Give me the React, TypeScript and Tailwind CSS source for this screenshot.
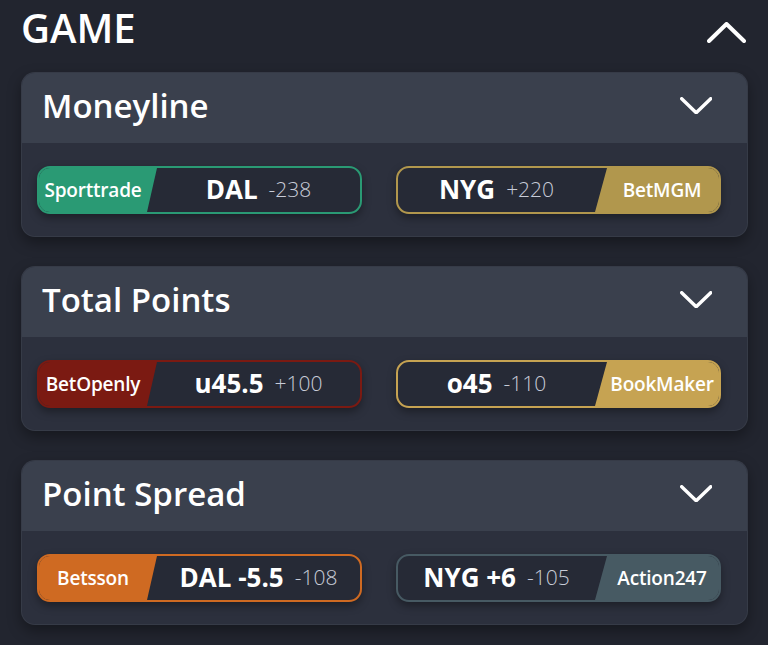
type Side = {
    book: string;
    color: string;
    border: string;
    main: string;
    odds: string;
};

const markets: { title: string; left: Side; right: Side }[] = [
    {
        title: "Moneyline",
        left: { book: "Sporttrade", color: "bg-[#2a9a74]", border: "border-[#2a9a74]", main: "DAL", odds: "-238" },
        right: { book: "BetMGM", color: "bg-[#b1974d]", border: "border-[#b1974d]", main: "NYG", odds: "+220" },
    },
    {
        title: "Total Points",
        left: { book: "BetOpenly", color: "bg-[#7b1a12]", border: "border-[#7b1a12]", main: "u45.5", odds: "+100" },
        right: { book: "BookMaker", color: "bg-[#c6a352]", border: "border-[#c6a352]", main: "o45", odds: "-110" },
    },
    {
        title: "Point Spread",
        left: { book: "Betsson", color: "bg-[#cf6a22]", border: "border-[#cf6a22]", main: "DAL -5.5", odds: "-108" },
        right: { book: "Action247", color: "bg-[#475a63]", border: "border-[#475a63]", main: "NYG +6", odds: "-105" },
    },
];

// simple chevron, drawn by hand so the stroke matches the screenshot
const Chevron = ({ up, w, h, stroke }: { up?: boolean; w: number; h: number; stroke: number }) => (
    <svg width={w + stroke} height={h + stroke} viewBox={`${-stroke / 2} ${-stroke / 2} ${w + stroke} ${h + stroke}`} fill="none">
        <polyline
            points={up ? `0,${h} ${w / 2},0 ${w},${h}` : `0,0 ${w / 2},${h} ${w},0`}
            stroke="white"
            strokeWidth={stroke}
            strokeLinecap="round"
            strokeLinejoin="round"
        />
    </svg>
);

const Pill = ({ side, flip }: { side: Side; flip?: boolean }) => {
    const book = (
        <div
            className={`${side.color} flex h-full items-center justify-center text-[19px] font-semibold tracking-[-0.2px] whitespace-nowrap text-white ${flip
                ? "w-[124px] pl-[12px] pr-[2px] [clip-path:polygon(12px_0,100%_0,100%_100%,0_100%)]"
                : "w-[118px] pr-[10px] [clip-path:polygon(0_0,100%_0,calc(100%-10px)_100%,0_100%)]"
                }`}
        >
            {side.book}
        </div>
    );
    return (
        <div
            className={`flex h-[48px] items-stretch overflow-hidden rounded-[13px] border-2 ${side.border} bg-[#262a36] shadow-[0_4px_8px_rgba(0,0,0,0.35)]`}
        >
            {!flip && book}
            <div className="flex flex-1 items-center justify-center gap-[11px] pb-[2px]">
                <span className="text-[26px] leading-none font-bold text-white">{side.main}</span>
                <span className="text-[21px] leading-none font-light text-[#c8ccd8]">{side.odds}</span>
            </div>
            {flip && book}
        </div>
    );
};

export default function App() {
    return (
        <div
            className="min-h-[645px] w-[768px] bg-[#22252f] pl-[21px] pr-[20px] pt-[4px]"
            style={{ fontFamily: "'Open Sans', Lato, sans-serif" }}
        >
            <div className="flex h-[68px] items-start justify-between">
                <h1 className="text-[40px] leading-[48px] font-semibold text-white">GAME</h1>
                <div className="mr-[2px] mt-[18px]">
                    <Chevron up w={35} h={17} stroke={4} />
                </div>
            </div>
            <div className="flex flex-col gap-[29px]">
                {markets.map((m) => (
                    <div
                        key={m.title}
                        className="overflow-hidden rounded-[14px] border border-[#40465280] bg-[#2c303d] shadow-[0_6px_14px_rgba(0,0,0,0.35)]"
                    >
                        <div className="flex h-[70px] items-center justify-between bg-[#3a404d] pb-[5px] pl-[20px] pr-[35px]">
                            <span className="text-[33px] leading-none font-semibold text-white">{m.title}</span>
                            <Chevron w={29} h={14} stroke={3.4} />
                        </div>
                        <div className="grid grid-cols-2 gap-[34px] pb-[22px] pl-[15px] pr-[26px] pt-[23px]">
                            <Pill side={m.left} />
                            <Pill side={m.right} flip />
                        </div>
                    </div>
                ))}
            </div>
        </div>
    );
}
